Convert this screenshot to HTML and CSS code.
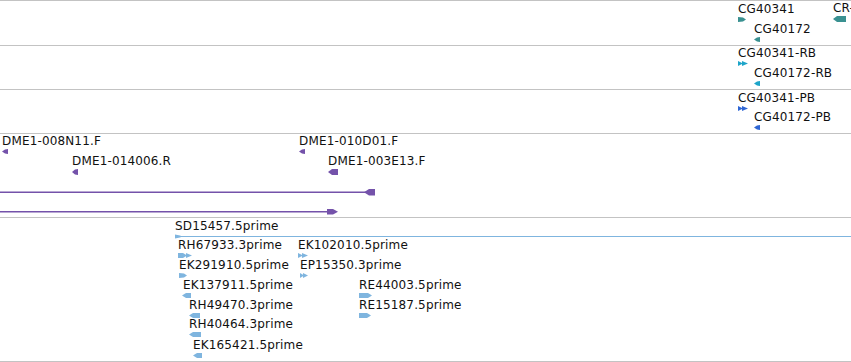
FILE: index.html
```html
<!DOCTYPE html>
<html lang="en">

<head>
    <meta charset="UTF-8">
    <meta name="viewport" content="width=device-width, initial-scale=1.0">
    <title>Tracks</title>
    <link rel="stylesheet" href="styles.css">
</head>

<body>
    <div class="tracks">

        <!-- genes -->
        <div class="track track-gene first">
            <div class="feat" style="left:738px;top:1px">
                <span class="label">CG40341</span>
                <svg class="glyph" width="8" height="5"><polygon points="0,0 5,0.5 8,2.5 5,4.5 0,5" /></svg>
            </div>
            <div class="feat" style="left:754px;top:21px">
                <span class="label">CG40172</span>
                <svg class="glyph" width="6" height="5"><polygon points="6,0 6,5 3,4.5 0,2.5 3,0.5" /></svg>
            </div>
            <div class="feat" style="left:833px;top:0px">
                <span class="label">CR-</span>
                <svg class="glyph" width="13" height="6"><polygon points="13,0 13,6 4,6 0,3 4,0" /></svg>
            </div>
        </div>

        <!-- transcripts -->
        <div class="track track-rna">
            <div class="feat" style="left:738px;top:0px">
                <span class="label">CG40341-RB</span>
                <svg class="glyph" width="10" height="5"><polygon points="0,0 5,2.5 0,5" /><polygon points="4,0 10,2.5 4,5" /></svg>
            </div>
            <div class="feat" style="left:754px;top:20px">
                <span class="label">CG40172-RB</span>
                <svg class="glyph" width="6" height="5"><polygon points="6,0 6,5 3,4.5 0,2.5 3,0.5" /></svg>
            </div>
        </div>

        <!-- proteins -->
        <div class="track track-pep">
            <div class="feat" style="left:738px;top:1px">
                <span class="label">CG40341-PB</span>
                <svg class="glyph" width="10" height="5"><polygon points="0,0 5,2.5 0,5" /><polygon points="4,0 10,2.5 4,5" /></svg>
            </div>
            <div class="feat" style="left:754px;top:20px">
                <span class="label">CG40172-PB</span>
                <svg class="glyph" width="6" height="5"><polygon points="6,0 6,5 3,4.5 0,2.5 3,0.5" /></svg>
            </div>
        </div>

        <!-- BAC ends -->
        <div class="track track-bac">
            <div class="feat" style="left:2px;top:0px">
                <span class="label">DME1-008N11.F</span>
                <svg class="glyph" width="6" height="5"><polygon points="6,0 6,5 3,4.5 0,2.5 3,0.5" /></svg>
            </div>
            <div class="feat" style="left:72px;top:20px">
                <span class="label">DME1-014006.R</span>
                <svg class="glyph" width="6" height="6"><polygon points="6,0 6,6 3,5.5 0,3 3,0.5" /></svg>
            </div>
            <div class="feat" style="left:299px;top:0px">
                <span class="label">DME1-010D01.F</span>
                <svg class="glyph" width="6" height="5"><polygon points="6,0 6,5 3,4.5 0,2.5 3,0.5" /></svg>
            </div>
            <div class="feat" style="left:328px;top:20px">
                <span class="label">DME1-003E13.F</span>
                <svg class="glyph" width="10" height="6"><polygon points="10,0 10,6 4,6 0,3 4,0" /></svg>
            </div>
            <svg class="span" style="left:0;top:55px" width="375" height="7">
                <rect x="0" y="2.5" width="366" height="1.5" />
                <polygon points="364,3.2 369,0 375,0 375,6.5 369,6.5" />
            </svg>
            <svg class="span" style="left:0;top:75px" width="338" height="6">
                <rect x="0" y="2" width="330" height="1.5" />
                <polygon points="327,0 333,0 338,2.7 333,5.5 327,5.5" />
            </svg>
        </div>

        <!-- ESTs -->
        <div class="track track-est">
            <div class="feat" style="left:175px;top:1px">
                <span class="label">SD15457.5prime</span>
                <svg class="glyph" width="676" height="5"><rect x="0" y="2" width="676" height="1" /><polygon points="0,0.5 5,1.5 7,2.5 5,3.5 0,4.5" /></svg>
            </div>
            <div class="feat" style="left:178px;top:20px">
                <span class="label">RH67933.3prime</span>
                <svg class="glyph" width="14" height="5"><polygon points="0,0 5,0 9,2.5 5,5 0,5" /><polygon points="8,0 14,2.5 8,5" /></svg>
            </div>
            <div class="feat" style="left:298px;top:20px">
                <span class="label">EK102010.5prime</span>
                <svg class="glyph" width="10" height="5"><polygon points="0,0 5,2.5 0,5" /><polygon points="4,0 10,2.5 4,5" /></svg>
            </div>
            <div class="feat" style="left:179px;top:40px">
                <span class="label">EK291910.5prime</span>
                <svg class="glyph" width="8" height="5"><polygon points="0,0 5,0.5 8,2.5 5,4.5 0,5" /></svg>
            </div>
            <div class="feat" style="left:300px;top:40px">
                <span class="label">EP15350.3prime</span>
                <svg class="glyph" width="8" height="5"><polygon points="0,0 4,2.5 0,5" /><polygon points="3,0 8,2.5 3,5" /></svg>
            </div>
            <div class="feat" style="left:183px;top:60px">
                <span class="label">EK137911.5prime</span>
                <svg class="glyph left-shift" width="9" height="5"><polygon points="9,0 9,5 4,5 0,2.5 4,0" /></svg>
            </div>
            <div class="feat" style="left:359px;top:60px">
                <span class="label">RE44003.5prime</span>
                <svg class="glyph" width="13" height="5"><polygon points="0,0 9,0 13,2.5 9,5 0,5" /></svg>
            </div>
            <div class="feat" style="left:189px;top:80px">
                <span class="label">RH49470.3prime</span>
                <svg class="glyph" width="11" height="5"><polygon points="11,0 11,5 4,5 0,2.5 4,0" /></svg>
            </div>
            <div class="feat" style="left:359px;top:80px">
                <span class="label">RE15187.5prime</span>
                <svg class="glyph" width="12" height="5"><polygon points="0,0 8,0 12,2.5 8,5 0,5" /></svg>
            </div>
            <div class="feat" style="left:189px;top:99px">
                <span class="label">RH40464.3prime</span>
                <svg class="glyph" width="12" height="5"><polygon points="12,0 12,5 4,5 0,2.5 4,0" /></svg>
            </div>
            <div class="feat" style="left:193px;top:120px">
                <span class="label">EK165421.5prime</span>
                <svg class="glyph" width="9" height="5"><polygon points="9,0 9,5 4,5 0,2.5 4,0" /></svg>
            </div>
        </div>

    </div>
</body>

</html>
```

FILE: styles.css
```css
:root {
    --line-color: #c3c3c3;
    --gene-color: #3a9191;
    --rna-color: #1ea5c9;
    --pep-color: #2f66d4;
    --bac-color: #7452aa;
    --est-color: #7fb5df;
}

body {
    margin: 0;
    background-color: #fff;
    font-family: "DejaVu Sans", sans-serif;
    overflow: hidden;
}

.tracks {
    display: flex;
    flex-direction: column;
    width: 851px;
}

.track {
    position: relative;
    overflow: hidden;
    border-bottom: 1px solid var(--line-color);
}

.track.first {
    border-top: 1px solid var(--line-color);
}

.track-gene {
    height: 44px;
    fill: var(--gene-color);
}

.track-rna {
    height: 43px;
    fill: var(--rna-color);
}

.track-pep {
    height: 43px;
    fill: var(--pep-color);
}

.track-bac {
    height: 83px;
    fill: var(--bac-color);
}

.track-est {
    height: 143px;
    fill: var(--est-color);
}

.feat {
    position: absolute;
}

.label {
    display: block;
    font-size: 12px;
    line-height: 14px;
    letter-spacing: 0.15px;
    color: #111;
    white-space: nowrap;
}

.glyph {
    display: block;
    margin-top: 1px;
}

.glyph.left-shift {
    margin-left: -1px;
}

.span {
    position: absolute;
}
```
